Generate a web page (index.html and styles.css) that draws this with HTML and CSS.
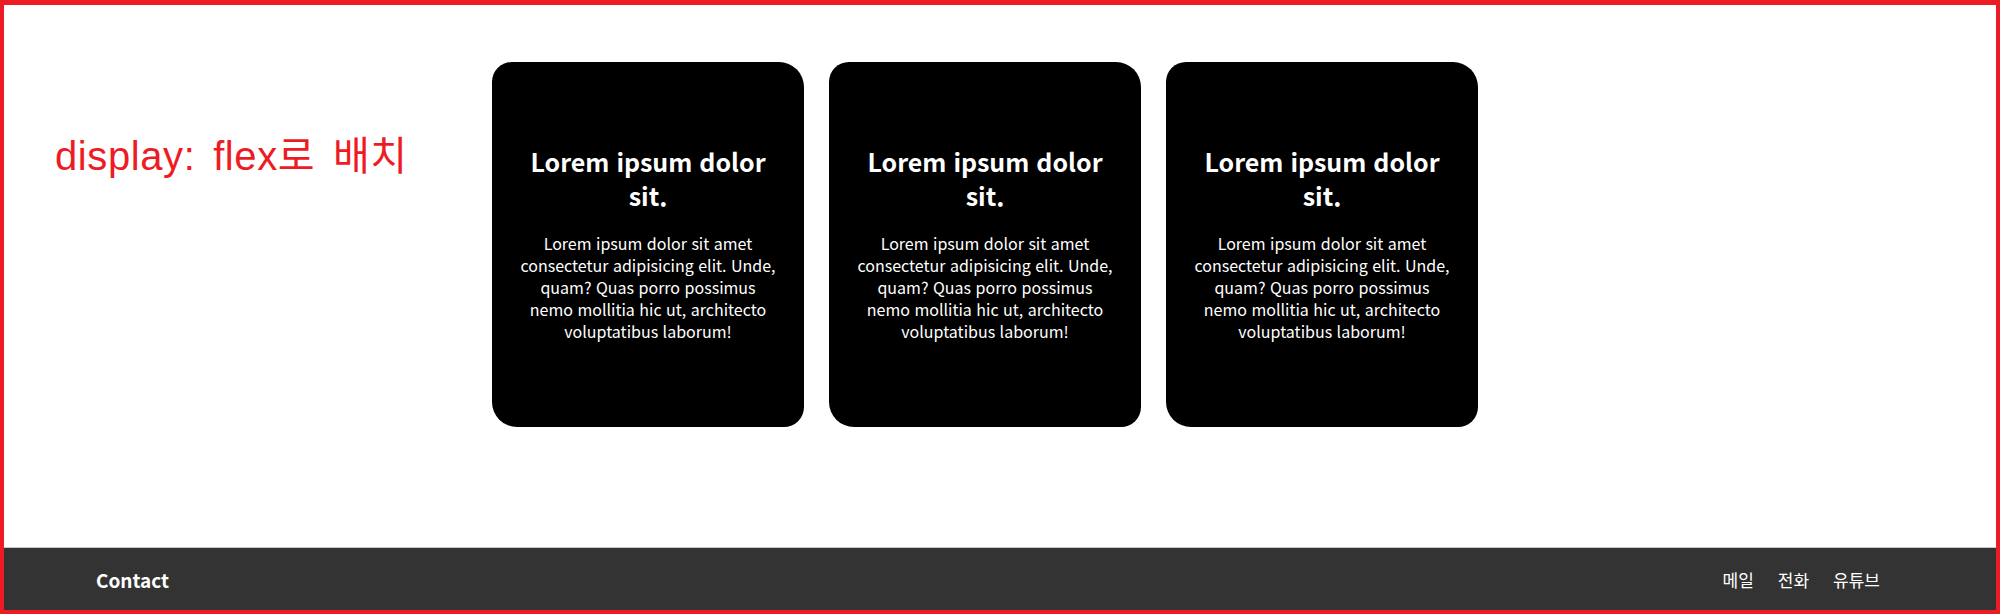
FILE: index.html
```html
<!DOCTYPE html>
<html lang="ko">
<head>
<meta charset="utf-8">
<title>display: flex</title>
<link rel="stylesheet" href="styles.css">
</head>
<body>
<div class="frame">
  <main class="main">
    <div class="intro">
      <h1 class="intro-title">display: flex로 배치</h1>
    </div>
    <section class="cards">
      <article class="card">
        <h2 class="card-title">Lorem ipsum dolor sit.</h2>
        <p class="card-text">Lorem ipsum dolor sit amet consectetur adipisicing elit. Unde, quam? Quas porro possimus nemo mollitia hic ut, architecto voluptatibus laborum!</p>
      </article>
      <article class="card">
        <h2 class="card-title">Lorem ipsum dolor sit.</h2>
        <p class="card-text">Lorem ipsum dolor sit amet consectetur adipisicing elit. Unde, quam? Quas porro possimus nemo mollitia hic ut, architecto voluptatibus laborum!</p>
      </article>
      <article class="card">
        <h2 class="card-title">Lorem ipsum dolor sit.</h2>
        <p class="card-text">Lorem ipsum dolor sit amet consectetur adipisicing elit. Unde, quam? Quas porro possimus nemo mollitia hic ut, architecto voluptatibus laborum!</p>
      </article>
    </section>
  </main>
  <footer class="footer">
    <div class="footer-brand">Contact</div>
    <nav class="footer-links">
      <a class="footer-link" href="#">메일</a>
      <a class="footer-link" href="#">전화</a>
      <a class="footer-link" href="#">유튜브</a>
    </nav>
  </footer>
</div>
</body>
</html>
```

FILE: styles.css
```css
* {
  box-sizing: border-box;
}

html, body {
  margin: 0;
  padding: 0;
  background: #ffffff;
}

body {
  font-family: "Noto Sans CJK KR", "Noto Sans", sans-serif;
}

.frame {
  width: 2000px;
  height: 614px;
  border: 4px solid #ed1c24;
  border-top-width: 5px;
  display: flex;
  flex-direction: column;
}

.main {
  flex: 1;
  display: flex;
  padding-left: 51px;
}

.intro {
  flex: 0 0 437px;
  padding-top: 129px;
}

.intro-title {
  margin: 0;
  font-family: "Liberation Sans", "Noto Sans CJK KR", sans-serif;
  font-weight: normal;
  font-size: 40px;
  line-height: 44px;
  letter-spacing: 0.6px;
  word-spacing: 6px;
  color: #ed1c24;
}

.cards {
  display: flex;
  gap: 25px;
  padding-top: 57px;
  align-items: flex-start;
}

.card {
  width: 312px;
  height: 365px;
  background: #000000;
  color: #ffffff;
  border-radius: 20px 25px 20px 25px;
  display: flex;
  flex-direction: column;
  justify-content: center;
  align-items: center;
  text-align: center;
  padding: 0 25px;
}

.card-title {
  margin: -4px 0 20px;
  font-size: 25px;
  line-height: 34px;
  font-weight: bold;
}

.card-text {
  margin: 0;
  font-size: 16px;
  line-height: 22px;
}

.footer {
  height: 63px;
  background: #333333;
  border-top: 1px solid #c8c8c8;
  display: flex;
  align-items: center;
  justify-content: space-between;
  padding: 0 116px 0 92px;
  color: #ffffff;
}

.footer-brand {
  font-size: 19px;
  font-weight: bold;
}

.footer-links {
  display: flex;
  gap: 24px;
}

.footer-link {
  color: #ffffff;
  text-decoration: none;
  font-size: 17px;
}
```
